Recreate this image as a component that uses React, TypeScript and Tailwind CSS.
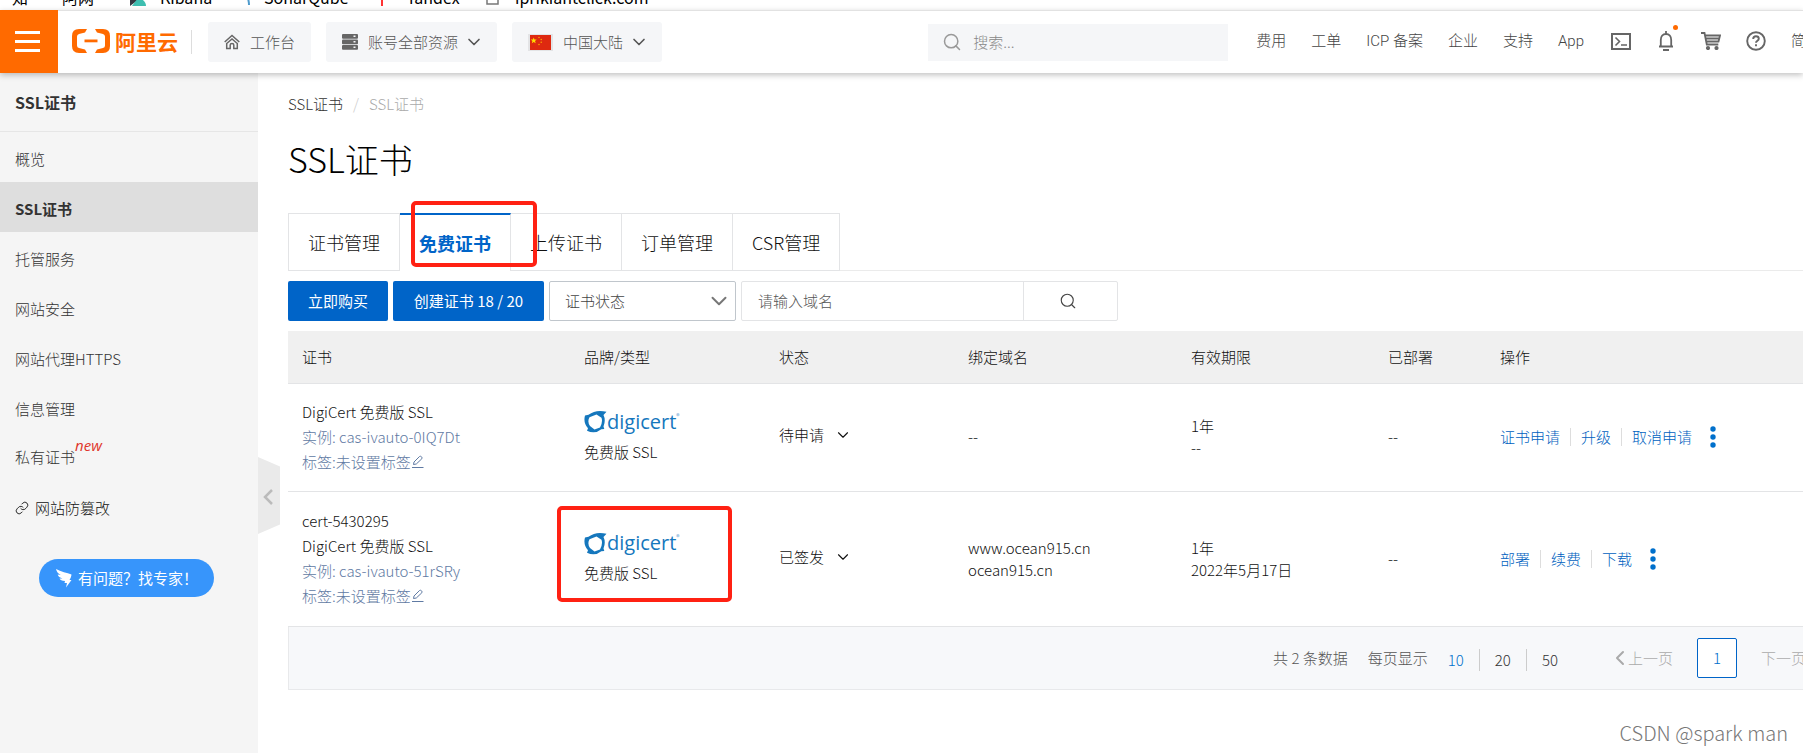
import type { ReactNode } from "react"
import clsx from "clsx"
import { ChevronDown, ChevronLeft, Link, Search } from "lucide-react"

interface Certificate {
  name?: string
  product: string
  instance: string
  status: string
  domains: string[]
  period: string[]
  deployed: string
  actions: string[]
  highlighted?: boolean
}

const certificates: Certificate[] = [
  {
    product: "DigiCert 免费版 SSL",
    instance: "cas-ivauto-0IQ7Dt",
    status: "待申请",
    domains: ["--"],
    period: ["1年", "--"],
    deployed: "--",
    actions: ["证书申请", "升级", "取消申请"],
  },
  {
    name: "cert-5430295",
    product: "DigiCert 免费版 SSL",
    instance: "cas-ivauto-51rSRy",
    status: "已签发",
    domains: ["www.ocean915.cn", "ocean915.cn"],
    period: ["1年", "2022年5月17日"],
    deployed: "--",
    actions: ["部署", "续费", "下载"],
    highlighted: true,
  },
]

const tabs = ["证书管理", "免费证书", "上传证书", "订单管理", "CSR管理"]
const topLinks = ["费用", "工单", "ICP 备案", "企业", "支持", "App"]

function BookmarksBar() {
  return (
    <div className="flex h-[10px] shrink-0 items-end overflow-hidden whitespace-nowrap bg-white text-[16px] leading-[26px] font-normal text-black">
      <span className="ml-3 w-[50px]">知</span>
      <span className="w-[68px]">阿网</span>
      <svg width="16" height="20" viewBox="0 0 16 20" className="mb-1">
        <path d="M0 0h16L0 18z" fill="#f04e98" />
        <path d="M0 6c5 0 9 2 12 5L0 20z" fill="#343741" />
        <path d="M8 12c5 1 8 4 8 8H2z" fill="#3ebeb0" />
      </svg>
      <span className="ml-[14px] w-[84px]">Kibana</span>
      <svg width="8" height="16" viewBox="0 0 8 16" className="mb-1">
        <path d="M1 0c2 5 4 9 4 15" fill="none" stroke="#4e9bcd" strokeWidth="2" />
      </svg>
      <span className="ml-3 w-[117px]">SonarQube</span>
      <span className="mb-1 h-4 w-[2px] bg-[#f33]" />
      <span className="ml-6 w-[79px]">Yandex</span>
      <svg width="13" height="16" viewBox="0 0 13 16" className="mb-[5px]">
        <path d="M1 1h8l3 3v11H1z" fill="none" stroke="#777" strokeWidth="1.500" />
      </svg>
      <span className="ml-4">iprikiantclick.com</span>
    </div>
  )
}

function AliyunLogo() {
  return (
    <a href="#" className="ml-[14px] flex shrink-0 items-center gap-[5px] pb-[2px] text-[#ff6a00]">
      <svg width="38" height="24" viewBox="0 0 38 24" fill="currentColor">
        <path d="M15 0H7Q0 0 0 7v10q0 7 7 7h8l-2-3.500-6-1.500q-2-.5-2-2.500V7.500Q5 5.500 7 5l6-1.500z" />
        <path d="M23 0h8q7 0 7 7v10q0 7-7 7h-8l2-3.500 6-1.500q2-.5 2-2.500V7.500q0-2-2-2.500l-6-1.500z" />
        <path d="M12.500 10.500h13v2.800h-13z" />
      </svg>
      <span className="text-[21px] leading-6 font-bold">阿里云</span>
    </a>
  )
}

function HomeIcon() {
  return (
    <svg width="16" height="16" viewBox="0 0 16 16" fill="none" stroke="#666" strokeWidth="1.500">
      <path d="M.7 8 8 1.500 15.300 8" />
      <path d="M2.700 9.500V14.500h3.500v-3.500q0-1.500 1.800-1.500t1.800 1.500v3.500h3.500V9.500L8 5z" />
    </svg>
  )
}

function ServerIcon() {
  return (
    <svg width="16" height="16" viewBox="0 0 16 16">
      {[0, 5.5, 11].map((y) => (
        <g key={y}>
          <rect y={y} width="16" height="4.800" rx="1" fill="#666" />
          <rect x="11.500" y={y + 1.5} width="2" height="1.500" fill="#f5f6f8" />
        </g>
      ))}
    </svg>
  )
}

function ChinaFlag() {
  return (
    <svg width="25" height="17" viewBox="0 0 25 17">
      <rect width="25" height="17" fill="#e3e4e6" />
      <rect x="2" y="1" width="21" height="15" fill="#de2910" />
      <path d="m5.700 3.500.8 2.100h2.200L7 7l.7 2.200-2-1.300-1.900 1.300L4.400 7 2.700 5.600h2.200z" fill="#ffde00" />
      <g fill="#ffb400">
        <circle cx="11" cy="3.500" r=".7" />
        <circle cx="13.200" cy="5.500" r=".7" />
        <circle cx="13.200" cy="8.300" r=".7" />
        <circle cx="11" cy="10.500" r=".7" />
      </g>
    </svg>
  )
}

// small pencil over an underline
function EditIcon() {
  return (
    <svg width="13" height="13" viewBox="0 0 13 13" fill="none" stroke="currentColor">
      <path d="M2.500 9.500 3 7 8.500 1.500Q9.500.8 10.500 1.800T10.800 3.800L5.300 9z" />
      <path d="M1 12.500h11.500" />
    </svg>
  )
}

function HeaderButton({ icon, label, menu }: { icon: ReactNode; label: string; menu?: boolean }) {
  return (
    <button className="mr-[15px] flex h-10 shrink-0 items-center rounded-[3px] bg-[#f5f6f8] px-4 text-[#555]">
      {icon}
      <span className="ml-[10px]">{label}</span>
      {menu && <ChevronDown size={20} strokeWidth={2} className="-mr-[3px] ml-[6px]" />}
    </button>
  )
}

function Header() {
  return (
    <header className="relative z-20 flex h-[63px] shrink-0 items-center overflow-x-clip border-t border-[#e2e2e2] bg-white whitespace-nowrap shadow-[0_2px_6px_rgba(0,0,0,0.25)]">
      <button
        aria-label="菜单"
        className="-mt-px flex w-[58px] shrink-0 flex-col items-center justify-center gap-[6px] self-stretch bg-[#ff6a00] pr-1"
      >
        <span className="h-[3px] w-[25px] bg-white" />
        <span className="h-[3px] w-[25px] bg-white" />
        <span className="h-[3px] w-[25px] bg-white" />
      </button>
      <AliyunLogo />
      <span className="mr-4 ml-[13px] h-6 w-px shrink-0 bg-[#ddd]" />
      <HeaderButton icon={<HomeIcon />} label="工作台" />
      <HeaderButton icon={<ServerIcon />} label="账号全部资源" menu />
      <HeaderButton icon={<ChinaFlag />} label="中国大陆" menu />

      <label className="ml-auto flex h-[37px] w-[300px] shrink-0 items-center bg-[#f5f6f8] pl-[14px]">
        <Search size={20} strokeWidth={1.8} className="text-[#999]" />
        <input
          type="text"
          aria-label="搜索"
          placeholder="搜索..."
          className="ml-[11px] w-[240px] bg-transparent outline-none placeholder:text-[#888]"
        />
      </label>

      <nav className="-mr-[18px] ml-7 flex shrink-0 items-center gap-[27px] pb-[2px] font-[Roboto,'Noto_Sans_CJK_SC',sans-serif] text-[#444]">
        <div className="flex gap-[25px]">
          {topLinks.map((link) => (
            <a key={link} href="#">
              {link}
            </a>
          ))}
        </div>
        <div className="flex items-center gap-[25px]">
          <a href="#" aria-label="Cloud Shell">
            <svg width="20" height="17" viewBox="0 0 20 17" fill="none" stroke="#666" strokeWidth="2">
              <path d="M1 1h18v15H1z" />
              <path d="m4.500 4.500 4 4-4 4M10 12h6" strokeWidth="1.600" />
            </svg>
          </a>
          <a href="#" aria-label="消息" className="relative">
            <svg width="20" height="20" viewBox="-1 0 20 20" fill="none" stroke="#666" strokeWidth="1.800">
              <path d="M2 15.500h14M3.800 15.500V9c0-3.500 2-6 5.200-6s5.200 2.500 5.200 6v6.500M9 0v3M6 19h6" />
            </svg>
            <span className="absolute -top-[6px] left-[17px] size-[5px] rounded-full bg-[#ff6a00]" />
          </a>
          <a href="#" aria-label="购物车">
            <svg width="20" height="18" viewBox="0 0 20 18" fill="none" stroke="#666" strokeWidth="1.800">
              <path d="M0 1h3.500l2.300 11.500h11.500M4 3.500h15L17.500 9.500H5.300M5 6.500h13" />
              <circle cx="7" cy="16" r="1.200" fill="#666" />
              <circle cx="15.500" cy="16" r="1.200" fill="#666" />
            </svg>
          </a>
          <a href="#" aria-label="帮助">
            <svg width="20" height="20" viewBox="0 0 20 20" fill="none" stroke="#666" strokeWidth="1.900">
              <circle cx="10" cy="10" r="8.800" />
              <path d="M7.200 8c0-1.800 1.200-2.800 2.800-2.800s2.800 1 2.800 2.500c0 1.900-2.800 2-2.800 4M10 13.200v2" />
            </svg>
          </a>
          <a href="#">简体</a>
        </div>
      </nav>
    </header>
  )
}

function Sidebar() {
  const itemClass = "flex h-[50px] items-center pt-1 pl-[15px]"

  return (
    <aside className="relative w-[258px] shrink-0 bg-[#f5f5f5] text-[#333]">
      <h2 className="flex h-[59px] items-center border-b border-[#e6e6e6] pl-[15px] text-[16px] font-bold text-[#333]">
        SSL证书
      </h2>
      <nav>
        <a href="#" className={itemClass}>
          概览
        </a>
        <a href="#" className={clsx(itemClass, "bg-[#dedede] font-bold text-[#333]")}>
          SSL证书
        </a>
        {["托管服务", "网站安全", "网站代理HTTPS", "信息管理"].map((item) => (
          <a key={item} href="#" className={itemClass}>
            {item}
          </a>
        ))}
        <a href="#" className="flex h-[50px] items-center pl-[15px]">
          私有证书
          <em className="mb-6 font-['Open_Sans'] text-[15px] font-normal text-[#e0352b]">new</em>
        </a>
        <a href="#" className="flex h-[50px] items-center pt-[2px] pl-[15px] text-[#111]">
          <Link size={14} strokeWidth={1.5} className="mr-[6px]" />
          网站防篡改
        </a>
      </nav>
      <button className="mt-[27px] ml-[39px] flex h-[38px] w-[175px] items-center rounded-full bg-[#3795fb] pl-[17px] font-normal text-white">
        <svg width="16" height="19" viewBox="0 0 16 19" fill="currentColor" className="mr-[6px]">
          <path d="M0 0c5 3 11 3.500 15.500 5.500-.2 2-1 4-2 5.500h2L10 18.500l1-4.500H8.500l.5-2C6 12 4 11 3.500 9.500l3 0C4 8.500 2 7.500 1.700 5.500l3 .5C2 4.500.5 2.500 0 0z" />
        </svg>
        有问题？找专家！
      </button>

      {/* collapse handle sticking out over the content */}
      <button aria-label="收起" className="absolute top-[384px] left-full z-10 h-[77px] w-[22px]">
        <svg width="22" height="77" viewBox="0 0 22 77">
          <path d="M0 0l22 9.500v58L0 77z" fill="#eaeaea" />
          <path d="M14 33l-7 7 7 7" fill="none" stroke="#bbb" strokeWidth="2.500" />
        </svg>
      </button>
    </aside>
  )
}

function Tabs() {
  return (
    <div role="tablist" className="mt-[33px] flex h-[58px] text-lg text-[#111]">
      {tabs.map((tab, i) => {
        const active = tab === "免费证书"
        return (
          <button
            key={tab}
            role="tab"
            aria-selected={active}
            className={clsx(
              "relative shrink-0 border-r border-[#e3e4e6] px-[19px]",
              i === 0 && "border-l",
              active ? "border-t-2 border-t-[#0064c8] font-bold text-[#0064c8]" : "border-t border-b",
            )}
          >
            {tab}
            {active && (
              <span className="absolute -top-[14px] left-[11px] z-10 h-[66px] w-[126px] rounded-[5px] border-4 border-[#ff2113]" />
            )}
          </button>
        )
      })}
      <span className="flex-1 border-b border-[#ebebeb]" />
    </div>
  )
}

function Toolbar() {
  return (
    <div className="mt-[10px] flex h-10 gap-[5px] text-[#444]">
      <button className="w-[100px] rounded-[2px] bg-[#0064c8] font-normal text-white">立即购买</button>
      <button className="w-[151px] rounded-[2px] bg-[#0064c8] font-normal text-white">创建证书 18 / 20</button>
      <div className="relative w-[187px]">
        <select
          aria-label="证书状态"
          className="h-full w-full appearance-none rounded-[2px] border border-[#c0c6cc] bg-white pl-[15px] outline-none"
        >
          <option>证书状态</option>
        </select>
        <ChevronDown size={26} strokeWidth={1.8} className="pointer-events-none absolute top-[7px] right-1 text-[#777]" />
      </div>
      <form className="flex w-[377px] rounded-[2px] border border-[#e3e4e6]">
        <input
          type="text"
          aria-label="请输入域名"
          placeholder="请输入域名"
          className="min-w-0 flex-1 pl-4 outline-none placeholder:text-[#555]"
        />
        <button type="button" aria-label="搜索" className="flex w-[94px] items-center justify-center border-l border-[#e3e4e6] pr-[6px]">
          <Search size={18} strokeWidth={1.5} className="text-[#444]" />
        </button>
      </form>
    </div>
  )
}

function DigicertLogo() {
  return (
    <div className="flex h-8 items-center text-[#1577bd]">
      <svg width="23" height="23" viewBox="0 0 23 23" fill="currentColor">
        <path
          d="M1 5.500 4.500 4.800Q12-1 22.500 1.800L19.500 5Q22 10 19.500 16.500l.8 2.500-3 .2Q11 24.500 3 20.800l1-2.500Q-1 12.500 1 5.500zM5.500 7.200Q3 11.500 6 16L10.500 19.500 16 17.500Q19 12 17.500 7.800L12.500 4.500z"
          fillRule="evenodd"
        />
      </svg>
      <span className="font-['Open_Sans'] text-[20px] leading-8 font-medium">digicert</span>
      <span className="mb-3 text-[7px]">®</span>
    </div>
  )
}

function CertificateRow({ cert }: { cert: Certificate }) {
  return (
    <tr className={clsx("border-b border-[#e3e4e6]", cert.name && "h-[135px]")}>
      <td className="pt-[15px] pb-[17px] pl-[14px] leading-[25px]">
        {cert.name && <div>{cert.name}</div>}
        <div>{cert.product}</div>
        <div className="text-[#5f7aa3]">实例: {cert.instance}</div>
        <a href="#" className="flex items-center text-[#5f7aa3]">
          标签:未设置标签
          <EditIcon />
        </a>
      </td>
      <td className="relative pb-[3px] pl-[14px]">
        <DigicertLogo />
        <div className="leading-7">免费版 SSL</div>
        {cert.highlighted && (
          <span className="absolute top-[14px] -left-[13px] h-24 w-[175px] rounded-[5px] border-4 border-[#ff2113]" />
        )}
      </td>
      <td className="pb-1 pl-[14px]">
        <button className="flex items-center gap-[10px]">
          {cert.status}
          <ChevronDown size={18} strokeWidth={1.5} />
        </button>
      </td>
      <td className="pl-[14px]">
        {cert.domains.map((domain) => (
          <div key={domain}>{domain}</div>
        ))}
      </td>
      <td className="pl-[14px]">
        {cert.period.map((line) => (
          <div key={line}>{line}</div>
        ))}
      </td>
      <td className="pl-[14px]">{cert.deployed}</td>
      <td className="pl-[14px]">
        <div className="flex items-center text-[#005fc0]">
          {cert.actions.map((action, i) => (
            <a key={action} href="#" className="flex items-center">
              {i > 0 && <span className="mx-[10px] h-[18px] w-px bg-[#ddd]" />}
              {action}
            </a>
          ))}
          <button aria-label="更多" className="ml-[18px] text-[#0070cc]">
            <svg width="6" height="24" viewBox="0 0 6 24" fill="currentColor">
              <circle cx="3" cy="4" r="2.700" />
              <circle cx="3" cy="12" r="2.700" />
              <circle cx="3" cy="20" r="2.700" />
            </svg>
          </button>
        </div>
      </td>
    </tr>
  )
}

function CertificateTable() {
  return (
    <table className="mt-[10px] w-full table-fixed text-left leading-[22px] text-[#111]">
      <thead>
        <tr className="h-[52px] border-b border-[#e3e4e6] bg-[#f0f0f0]">
          <th className="w-[282px] pl-[14px] font-light">证书</th>
          <th className="w-[195px] pl-[14px] font-light">品牌/类型</th>
          <th className="w-[189px] pl-[14px] font-light">状态</th>
          <th className="w-[223px] pl-[14px] font-light">绑定域名</th>
          <th className="w-[197px] pl-[14px] font-light">有效期限</th>
          <th className="w-[112px] pl-[14px] font-light">已部署</th>
          <th className="pl-[14px] font-light">操作</th>
        </tr>
      </thead>
      <tbody>
        {certificates.map((cert) => (
          <CertificateRow key={cert.instance} cert={cert} />
        ))}
      </tbody>
    </table>
  )
}

function Pagination() {
  return (
    <div className="flex h-[63px] items-center justify-end border-b border-l border-[#e8e9eb] bg-[#f7f8fa] text-[#555]">
      <span>共 2 条数据</span>
      <span className="ml-5">每页显示</span>
      <div className="ml-[5px] flex items-center pt-1 text-[#333]">
        <button className="px-[15px] text-[#0070cc]">10</button>
        <button className="border-l border-[#ccc] px-[15px]">20</button>
        <button className="border-l border-[#ccc] px-[15px]">50</button>
      </div>
      <button disabled className="ml-[35px] flex items-center text-[#aaa]">
        <ChevronLeft size={24} strokeWidth={2} className="-mr-1" />
        上一页
      </button>
      <button className="mx-6 size-10 rounded-[2px] border border-[#0064c8] bg-white text-[#0070cc]">1</button>
      <button disabled className="text-[#aaa]">
        下一页
      </button>
    </div>
  )
}

export default function App() {
  return (
    <div className="relative flex min-h-screen flex-col overflow-hidden bg-white font-['Noto_Sans_CJK_SC',sans-serif] text-[15px] leading-[22px] font-light">
      <BookmarksBar />
      <Header />
      <div className="flex flex-1">
        <Sidebar />
        <main className="min-w-0 flex-1 pt-5 pl-[30px]">
          <nav className="flex gap-[10px] text-[#333]">
            <a href="#">SSL证书</a>
            <span className="text-[#ccc]">/</span>
            <span className="text-[#aaa]">SSL证书</span>
          </nav>
          <h1 className="mt-[23px] text-[34px] leading-[42px] text-black">SSL证书</h1>
          <Tabs />
          <Toolbar />
          {/* the list is a little wider than the pane and gets cut at the window edge */}
          <div className="-mr-[3px]">
            <CertificateTable />
            <Pagination />
          </div>
        </main>
      </div>
      <p className="absolute right-[15px] bottom-[6px] text-[20px] leading-7 text-[#777]">CSDN @spark man</p>
    </div>
  )
}
